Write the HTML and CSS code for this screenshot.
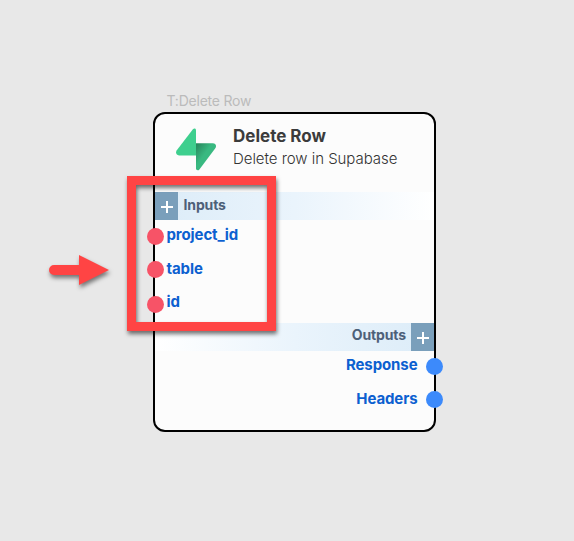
FILE: index.html
```html
<!DOCTYPE html>
<html lang="en">
<head>
<meta charset="utf-8">
<title>Delete Row</title>
<link rel="stylesheet" href="styles.css">
</head>
<body>
<main class="canvas">
  <div class="node-label">T:Delete Row</div>
  <section class="node">
    <header class="node-header">
      <svg class="logo" viewBox="0 0 41 43" width="41" height="43">
        <defs>
          <linearGradient id="fold" x1="20" y1="15" x2="31" y2="23" gradientUnits="userSpaceOnUse">
            <stop offset="0" stop-color="#268259"/>
            <stop offset="1" stop-color="#39b981"/>
          </linearGradient>
        </defs>
        <path fill="#3ecf8e" d="M20 15V2.2C20 .4 18.1 0 16.9 1.3L.8 22.2C-.8 24.3.4 27.4 3 27.4H20Z"/>
        <path fill="url(#fold)" d="M20 15.2V40.6C20 42.5 22.2 42.9 23.4 41.5L39.3 20.3C40.9 18.1 39.7 15.2 37 15.2Z"/>
      </svg>
      <div>
        <h1 class="title">Delete Row</h1>
        <p class="subtitle">Delete row in Supabase</p>
      </div>
    </header>
    <div class="bar inputs"><span class="plus"></span><span class="bar-name">Inputs</span></div>
    <ul class="ports ports-in">
      <li><i class="dot"></i>project_id</li>
      <li><i class="dot"></i>table</li>
      <li><i class="dot"></i>id</li>
    </ul>
    <div class="bar outputs"><span class="bar-name">Outputs</span><span class="plus"></span></div>
    <ul class="ports ports-out">
      <li>Response<i class="dot"></i></li>
      <li>Headers<i class="dot"></i></li>
    </ul>
  </section>
  <div class="highlight"></div>
  <svg class="arrow" viewBox="0 0 80 50" width="80" height="50">
    <path fill="#ff4444" d="M14 15H39V5L69 20L39 35V25H14A5 5 0 0 1 14 15Z"/>
  </svg>
</main>
</body>
</html>
```
FILE: styles.css
```css
* { box-sizing: border-box; }
body { margin: 0; background: #e8e8e8; font-family: Inter, sans-serif; }
.canvas { position: relative; width: 574px; height: 541px; overflow: hidden; }
.node-label {
  position: absolute; left: 166.5px; top: 92px;
  font-size: 14px; line-height: 18px; letter-spacing: -.22px; color: #bbb; white-space: nowrap;
}
.node {
  position: absolute; left: 153px; top: 112px; width: 283px; height: 320px;
  border: 2px solid #000; border-radius: 12px; background: #fcfcfc;
}
.node-header { display: flex; gap: 16px; height: 78.4px; padding: 14px 0 0 21px; }
.logo { flex: none; }
.title { margin: -3px 0 0; font-size: 17px; line-height: 23px; font-weight: 700; color: #3b3b3b; white-space: nowrap; }
.subtitle { margin: 0; font-size: 15px; line-height: 21px; font-weight: 300; letter-spacing: -.04px; color: #333; white-space: nowrap; }
.bar { display: flex; height: 28px; font-size: 14px; font-weight: 700; letter-spacing: -.12px; color: #4d6079; }
.bar-name { line-height: 25px; }
.inputs { gap: 5.5px; background: linear-gradient(90deg, #dcecf8, #eaf4fc 50%, #fff); }
.outputs { justify-content: flex-end; gap: 5px; background: linear-gradient(270deg, #dcecf8, #eaf4fc 50%, #fff); }
.outputs .bar-name { line-height: 23.5px; }
.plus {
  width: 23px; height: 28px;
  background:
    linear-gradient(#fff, #fff) 50% 14px / 12px 2px no-repeat,
    linear-gradient(#fff, #fff) 50% 9px / 2px 12px no-repeat,
    #7a9fbb;
}
.ports { margin: 0; padding: 0; list-style: none; font-size: 15px; font-weight: 700; letter-spacing: -.1px; color: #0c60d0; }
.ports li { display: flex; align-items: center; height: 33.5px; line-height: 30px; }
.ports-in { height: 102.6px; }
.ports-in li { gap: 2.5px; margin-left: -8px; padding-bottom: 4px; }
.ports-out li { justify-content: flex-end; gap: 8.5px; margin-right: -9px; padding-bottom: 5px; }
.dot { position: relative; top: 1.2px; width: 17px; height: 17px; border-radius: 50%; background: #f75367; }
.ports-in li:last-child .dot { top: 2.2px; }
.ports-out .dot { background: #3c8afb; }
.highlight {
  position: absolute; left: 127px; top: 176px; width: 149px; height: 155px;
  border: 9px solid #ff4444; filter: drop-shadow(1px 3px 2px rgba(0,0,0,.55));
}
.arrow { position: absolute; left: 40px; top: 250px; filter: drop-shadow(1px 3px 2px rgba(0,0,0,.5)); }
```
